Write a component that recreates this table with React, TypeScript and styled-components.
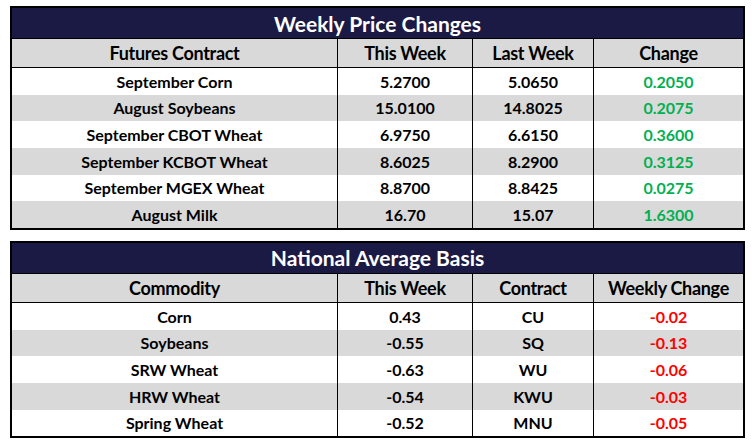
import styled, { createGlobalStyle } from "styled-components";

const GlobalStyle = createGlobalStyle`
  body {
    margin: 0;
    background: #fff;
    font-family: Lato, "Liberation Sans", Arial, sans-serif;
  }
`;

const Page = styled.div`
  display: flex;
  flex-direction: column;
  gap: 11px;
  padding: 6px 10px;
  width: 735px;
`;

const Table = styled.div`
  border: 2px solid #000;
  box-sizing: border-box;
  width: 735px;
`;

const Title = styled.div`
  height: 30px;
  background: #1b1a45;
  color: #fff;
  font-size: 21px;
  font-weight: bold;
  display: flex;
  align-items: center;
  justify-content: center;
`;

const Row = styled.div<{ $shade?: boolean; $head?: boolean }>`
  display: grid;
  grid-template-columns: 326px 135px 121px 1fr;
  height: ${(p) => (p.$head ? "28px" : "26.67px")};
  background: ${(p) => (p.$shade ? "#d9d9d9" : "#fff")};
  border-top: ${(p) => (p.$head ? "1px solid #000" : "none")};
  border-bottom: ${(p) => (p.$head ? "1px solid #000" : "none")};
  font-size: ${(p) => (p.$head ? "18px" : "16px")};
  letter-spacing: ${(p) => (p.$head ? "-0.3px" : "0")};
  font-weight: bold;
`;

const Cell = styled.div<{ $tone?: "up" | "down" }>`
  display: flex;
  align-items: center;
  justify-content: center;
  border-right: 1px solid #000;
  color: ${(p) => (p.$tone === "up" ? "#00b050" : p.$tone === "down" ? "#ff0000" : "#000")};
  &:last-child {
    border-right: none;
  }
`;

type Line = [string, string, string, string];

const prices: Line[] = [
  ["September Corn", "5.2700", "5.0650", "0.2050"],
  ["August Soybeans", "15.0100", "14.8025", "0.2075"],
  ["September CBOT Wheat", "6.9750", "6.6150", "0.3600"],
  ["September KCBOT Wheat", "8.6025", "8.2900", "0.3125"],
  ["September MGEX Wheat", "8.8700", "8.8425", "0.0275"],
  ["August Milk", "16.70", "15.07", "1.6300"],
];

const basis: Line[] = [
  ["Corn", "0.43", "CU", "-0.02"],
  ["Soybeans", "-0.55", "SQ", "-0.13"],
  ["SRW Wheat", "-0.63", "WU", "-0.06"],
  ["HRW Wheat", "-0.54", "KWU", "-0.03"],
  ["Spring Wheat", "-0.52", "MNU", "-0.05"],
];

type TableProps = {
  title: string;
  head: Line;
  rows: Line[];
};

const DataTable = ({ title, head, rows }: TableProps) => (
  <Table>
    <Title>{title}</Title>
    <Row $head $shade>
      {head.map((h) => (
        <Cell key={h}>{h}</Cell>
      ))}
    </Row>
    {rows.map((r, i) => (
      <Row key={r[0]} $shade={i % 2 === 1}>
        <Cell>{r[0]}</Cell>
        <Cell>{r[1]}</Cell>
        <Cell>{r[2]}</Cell>
        <Cell $tone={r[3].startsWith("-") ? "down" : "up"}>{r[3]}</Cell>
      </Row>
    ))}
  </Table>
);

export default function App() {
  return (
    <>
      <GlobalStyle />
      <Page>
        <DataTable
          title="Weekly Price Changes"
          head={["Futures Contract", "This Week", "Last Week", "Change"]}
          rows={prices}
        />
        <DataTable
          title="National Average Basis"
          head={["Commodity", "This Week", "Contract", "Weekly Change"]}
          rows={basis}
        />
      </Page>
    </>
  );
}
